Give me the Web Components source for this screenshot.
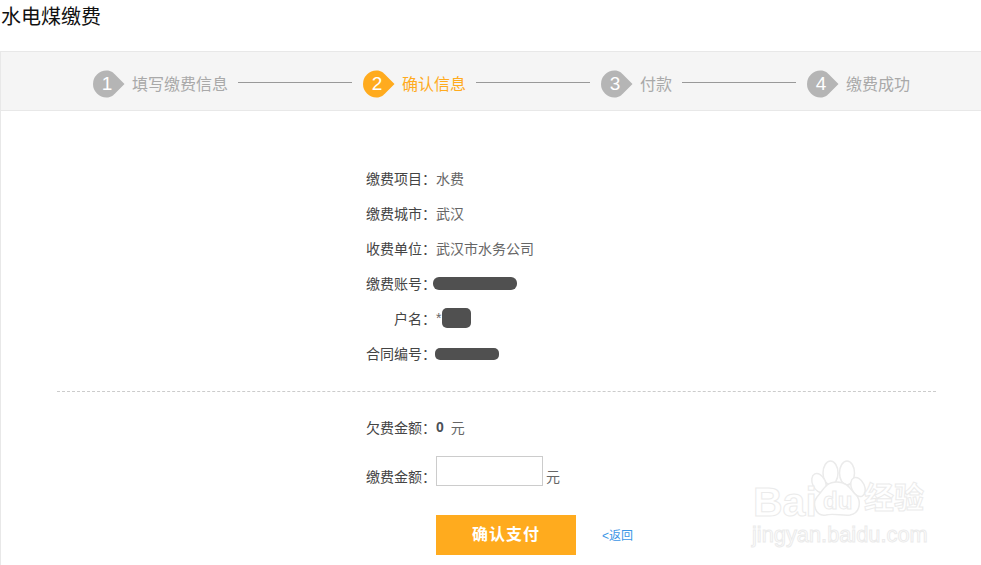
<!DOCTYPE html>
<html lang="zh"><head><meta charset="utf-8"><title>水电煤缴费</title>
<style>
html,body{margin:0;padding:0;background:#fff;overflow:hidden;height:565px}
body{font-family:"Liberation Sans","Noto Sans CJK SC",sans-serif}
</style></head><body>
<pay-page>
  <pay-steps slot="steps">
    <pay-step num="1" line>填写缴费信息</pay-step>
    <pay-step num="2" line active>确认信息</pay-step>
    <pay-step num="3" line>付款</pay-step>
    <pay-step num="4">缴费成功</pay-step>
  </pay-steps>
  <info-row label="缴费项目：">水费</info-row>
  <info-row label="缴费城市：">武汉</info-row>
  <info-row label="收费单位：">武汉市水务公司</info-row>
  <info-row label="缴费账号："><redact-blob style="--w:84px;--h:13px;--r:6px;--ml:-3px;--mt:2px"></redact-blob></info-row>
  <info-row label="户名：">*<redact-blob style="--w:29px;--h:20px;--r:5px;--ml:1px;--mt:1px"></redact-blob></info-row>
  <info-row label="合同编号："><redact-blob style="--w:64px;--h:12px;--r:5px;--ml:-1px;--mt:2px"></redact-blob></info-row>
  <dash-rule></dash-rule>
  <info-row label="欠费金额："><b style="color:#4a4f57;font-size:14px;margin-right:7px">0</b>元</info-row>
  <amount-row label="缴费金额：" unit="元"></amount-row>
  <action-row label="确认支付" back="&lt;返回"></action-row>
</pay-page>
<baidu-mark></baidu-mark>
<script>
const def=(name,html)=>customElements.define(name,class extends HTMLElement{
  connectedCallback(){
    if(this.shadowRoot)return;
    const r=this.attachShadow({mode:"open"});
    r.innerHTML=typeof html==="function"?html(this):html;
  }
});
const cjk='"Liberation Sans","Noto Sans CJK SC",sans-serif';
def("pay-page",`<style>
:host{display:block;width:981px;height:565px;font-family:${cjk}}
h1{margin:0;height:51px;box-sizing:border-box;padding:3px 0 0 1px;font-size:20px;line-height:28px;font-weight:400;color:#111}
.body{border-left:1px solid #e8e8e8;height:514px;box-sizing:border-box;display:flex;flex-direction:column}
.content{padding-top:49px;display:flex;flex-direction:column}
</style><h1>水电煤缴费</h1>
<div class="body"><slot name="steps"></slot><div class="content"><slot></slot></div></div>`);
def("pay-steps",`<style>
:host{display:flex;height:60px;box-sizing:border-box;background:#f5f5f5;border-top:1px solid #e8e8e8;border-bottom:1px solid #e8e8e8;padding:18px 0 0 91px}
</style><slot></slot>`);
def("pay-step",h=>`<style>
:host{display:flex;align-items:flex-start;height:28px;color:${h.hasAttribute("active")?"#ffab1e":"#a9a9a9"};font-size:16px}
.m{position:relative;width:32px;height:28px;flex:none}
.m svg{display:block;overflow:visible}
.n{position:absolute;left:1px;top:0;width:28px;height:28px;text-align:center;color:#fff;font:400 19px/28px "Liberation Sans",sans-serif}
.t{margin-left:8px;line-height:29px;white-space:nowrap}
.l{width:114px;height:1px;background:#999;margin:12px 10px 0 10px}
</style><div class="m"><svg width="32" height="28" viewBox="0 0 32 28"><path transform="translate(.5 0)" d="M14 .5C19 .5 21 3 23.500 5.500L32 14l-8.500 8.500C21 25 19 27.500 14 27.500A13.500 13.500 0 0 1 14 .5Z" fill="${h.hasAttribute("active")?"#ffab1e":"#b5b5b5"}"/></svg><span class="n">${h.getAttribute("num")}</span></div>
<span class="t"><slot></slot></span>${h.hasAttribute("line")?'<span class="l"></span>':""}`);
def("info-row",h=>`<style>
:host{display:grid;grid-template-columns:435px 1fr;height:35px;align-items:center;font-size:14px;color:#666}
.k{text-align:right;color:#444;white-space:nowrap}
.v{display:flex;align-items:center}
</style><span class="k">${h.getAttribute("label")}</span><span class="v"><slot></slot></span>`);
def("redact-blob",`<style>
:host{display:inline-block;width:var(--w);height:var(--h);border-radius:var(--r);margin-left:var(--ml);margin-top:var(--mt);background:#505050}
</style>`);
def("dash-rule",`<style>
:host{display:block;margin:21px 45px 17px 56px;height:0;border-top:1px dashed #ccc}
</style>`);
def("amount-row",h=>`<style>
:host{display:grid;grid-template-columns:435px auto 1fr;height:30px;margin:12px 0 29px;align-items:end;font-size:14px;color:#666}
.k{text-align:right;color:#444;line-height:24px;margin-bottom:-3px}
.u{margin-left:3px;line-height:24px;margin-bottom:-3px}
input{display:block;width:107px;height:30px;box-sizing:border-box;border:1px solid #ccc;background:#fff;margin:0;padding:0 4px;outline:0}
</style><span class="k">${h.getAttribute("label")}</span><input type="text"><span class="u">${h.getAttribute("unit")}</span>`);
def("action-row",h=>`<style>
:host{display:flex;padding-left:435px;align-items:center;height:40px;font-family:${cjk}}
button{width:140px;height:40px;border:0;margin:0;padding:0 0 4px;background:#ffab1e;color:#fff;font:700 16px ${cjk};letter-spacing:1px}
a{margin-left:26px;margin-bottom:2px;font-size:12px;color:#3c96e6;text-decoration:none}
</style><button>${h.getAttribute("label")}</button><a href="#">${h.getAttribute("back").replace("<","&lt;")}</a>`);
def("baidu-mark",`<style>
:host{position:absolute;left:740px;top:450px;width:241px;height:115px;pointer-events:none;font-family:"Liberation Sans","Noto Sans CJK SC",sans-serif}
span{position:absolute;color:#fff;-webkit-text-stroke:1px #ebebeb;white-space:nowrap;line-height:1}
svg{position:absolute;left:0;top:0}
.bai{left:13px;top:32px;font-size:41px;font-weight:700;letter-spacing:0}
.du{left:83px;top:39px;font-size:24px;font-weight:700}
.cn{left:124px;top:33px;font-size:30px;font-weight:700}
.url{left:12px;top:74px;font-size:21.800px}
</style><svg width="241" height="115" fill="#fff" stroke="#ebebeb" stroke-width="1.500">
<ellipse cx="90.500" cy="23" rx="7.500" ry="12"/><ellipse cx="107" cy="23" rx="7.500" ry="12"/>
<ellipse cx="79" cy="33" rx="6.500" ry="10" transform="rotate(-25 79 33)"/><ellipse cx="118" cy="37" rx="6.500" ry="10" transform="rotate(-25 118 37)"/>
<path d="M97 32c12 0 14 9 19 13 5 5 5 18-6 20-7 1-17-2-24 0-11 2-14-12-9-18 6-6 8-15 20-15Z"/>
</svg><span class="bai">Bai</span><span class="du">du</span><span class="cn">经验</span><span class="url">jingyan.baidu.com</span>`);
</script>
</body></html>
